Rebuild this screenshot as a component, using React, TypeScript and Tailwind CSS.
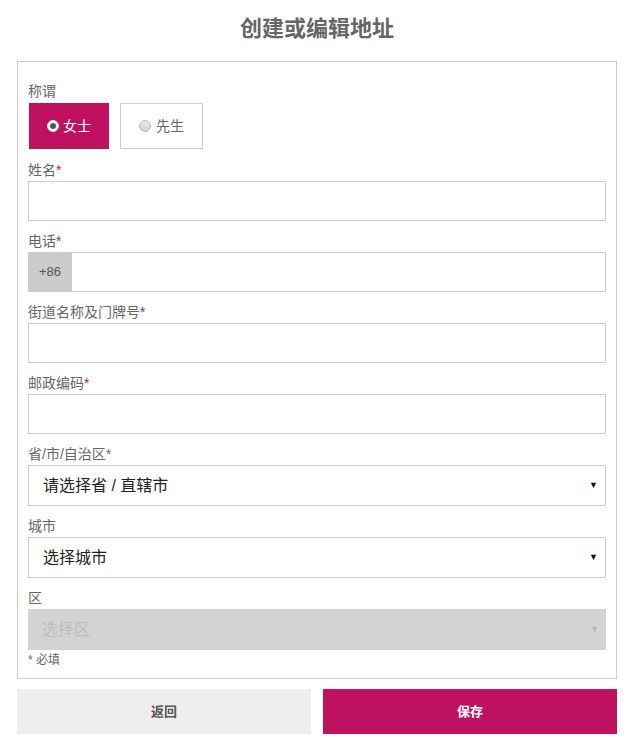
import React from "react";

const font = { fontFamily: '"Liberation Sans", "Noto Sans CJK SC", sans-serif' };

function Label({ text, star, starColor = "text-[#c0135f]" }: { text: string; star?: boolean; starColor?: string }) {
  return (
    <div className="h-[18px] text-[14px] leading-[18px] text-[#666]">
      {text}
      {star && <span className={starColor}>*</span>}
    </div>
  );
}

function Input() {
  return <div className="mt-[2px] h-[40px] border border-[#ccc] bg-white" />;
}

function Select({ text, disabled }: { text: string; disabled?: boolean }) {
  return (
    <div
      className={
        "mt-[2px] flex h-[41px] items-center justify-between pl-[14px] pr-[7px] " +
        (disabled ? "bg-[#d3d3d3] text-[#bdbdbd]" : "border border-[#ccc] bg-white text-[#222]")
      }
    >
      <span className="text-[16px] leading-[20px]">{text}</span>
      <span className={"text-[9px] " + (disabled ? "text-[#b5b5b5]" : "text-[#111]")}>▼</span>
    </div>
  );
}

export default function App() {
  return (
    <div className="w-[635px] bg-white pl-[17px] pr-[18px]" style={font}>
      <h1 className="pt-[15px] pb-[18px] text-center text-[22px] font-bold leading-[28px] text-[#666]">
        创建或编辑地址
      </h1>
      <div className="border border-[#ccc] px-[10px] pt-[20px] pb-[9px]">
        <Label text="称谓" />
        <div className="mt-[3px] flex gap-[11px]">
          <div className="ml-[1px] flex h-[46px] w-[80px] items-center justify-center gap-[4px] bg-[#be1160] text-[14px] text-white">
            <span className="flex h-[12px] w-[12px] items-center justify-center rounded-full border border-[#ddd] bg-white">
              <span className="h-[6px] w-[6px] rounded-full bg-[#4d5a5a]" />
            </span>
            <span>女士</span>
          </div>
          <div className="flex h-[46px] w-[83px] items-center justify-center gap-[5px] border border-[#ccc] bg-white text-[14px] text-[#666]">
            <span className="h-[12px] w-[12px] rounded-full border border-[#bbb] bg-gradient-to-b from-[#e8e8e8] to-[#cfcfcf]" />
            <span>先生</span>
          </div>
        </div>

        <div className="mt-[12px]">
          <Label text="姓名" star />
          <Input />
        </div>

        <div className="mt-[11px]">
          <Label text="电话" star />
          <div className="mt-[2px] flex h-[40px] border border-[#ccc] bg-white">
            <div className="-my-px -ml-px flex w-[44px] items-center justify-center bg-[#cccccc] text-[13px] text-[#555]">
              +86
            </div>
          </div>
        </div>

        <div className="mt-[11px]">
          <Label text="街道名称及门牌号" star />
          <Input />
        </div>

        <div className="mt-[11px]">
          <Label text="邮政编码" star />
          <Input />
        </div>

        <div className="mt-[11px]">
          <Label text="省/市/自治区" star starColor="text-[#666]" />
          <Select text="请选择省 / 直辖市" />
        </div>

        <div className="mt-[11px]">
          <Label text="城市" />
          <Select text="选择城市" />
        </div>

        <div className="mt-[11px]">
          <Label text="区" />
          <Select text="选择区" disabled />
        </div>

        <div className="mt-[1px] text-[12px] leading-[18px] text-[#666]">* 必填</div>
      </div>

      <div className="mt-[10px] flex gap-[12px]">
        <button className="h-[45px] flex-1 bg-[#eeeeee] text-[13px] font-bold text-[#555]">返回</button>
        <button className="h-[45px] flex-1 bg-[#be1160] text-[13px] font-bold text-white">保存</button>
      </div>
    </div>
  );
}
